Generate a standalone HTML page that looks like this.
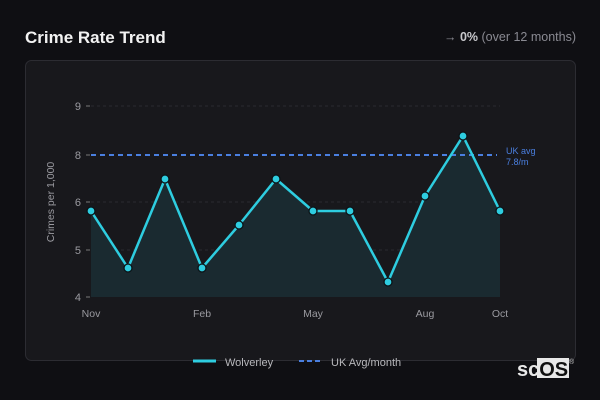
<!DOCTYPE html>
<html><head><meta charset="utf-8"><style>
body{margin:0;width:600px;height:400px;background:#0f0f13;overflow:hidden;font-family:"Liberation Sans",sans-serif;}
</style></head><body>
<svg width="600" height="400" xmlns="http://www.w3.org/2000/svg" style="position:absolute;left:0;top:0">
<text x="25" y="43" fill="#f2f2f2" font-size="17" font-weight="bold" font-family="Liberation Sans">Crime Rate Trend</text>
<text x="576" y="41" fill="#8a8a92" font-size="12.5" text-anchor="end" font-family="Liberation Sans">→ <tspan font-weight="bold" fill="#c8c8cc">0%</tspan> (over 12 months)</text>
<rect x="25.5" y="60.5" width="550" height="300" rx="6" fill="#18181c" stroke="#2c2c32"/>
<g stroke="#2a2a30" stroke-dasharray="3,3" stroke-width="1">
<line x1="91" y1="106" x2="500" y2="106"/><line x1="91" y1="202" x2="500" y2="202"/><line x1="91" y1="250" x2="500" y2="250"/>
</g>
<g stroke="#777" stroke-width="1"><line x1="86" y1="106" x2="90" y2="106"/><line x1="86" y1="155" x2="90" y2="155"/><line x1="86" y1="202" x2="90" y2="202"/><line x1="86" y1="250" x2="90" y2="250"/><line x1="86" y1="297" x2="90" y2="297"/></g>
<g fill="#9a9aa0" font-size="11" text-anchor="end" font-family="Liberation Sans">
<text x="81" y="110">9</text><text x="81" y="159">8</text><text x="81" y="206">6</text><text x="81" y="254">5</text><text x="81" y="301">4</text></g>
<text transform="translate(54,202) rotate(-90)" fill="#9a9aa0" font-size="10.5" text-anchor="middle" font-family="Liberation Sans">Crimes per 1,000</text>
<g fill="#9a9aa0" font-size="10.5" text-anchor="middle" font-family="Liberation Sans">
<text x="91" y="317">Nov</text><text x="202" y="317">Feb</text><text x="313" y="317">May</text><text x="425" y="317">Aug</text><text x="500" y="317">Oct</text></g>
<polygon fill="#1a2a30" points="91,211 128,268 165,179 202,268 239,225 276,179 313,211 350,211 388,282 425,196 463,136 500,211 500,297 91,297"/>
<line x1="91" y1="155" x2="497" y2="155" stroke="#4a7fe0" stroke-width="2" stroke-dasharray="5,4"/>
<text x="506" y="154" fill="#4a7fe0" font-size="9" font-family="Liberation Sans">UK avg</text>
<text x="506" y="165" fill="#4a7fe0" font-size="9" font-family="Liberation Sans">7.8/m</text>
<polyline fill="none" stroke="#2ecde0" stroke-width="2.5" stroke-linejoin="round" points="91,211 128,268 165,179 202,268 239,225 276,179 313,211 350,211 388,282 425,196 463,136 500,211"/>
<g fill="#2ecde0" stroke="#0c1418" stroke-width="1.3">
<circle cx="91" cy="211" r="4"/><circle cx="128" cy="268" r="4"/><circle cx="165" cy="179" r="4"/><circle cx="202" cy="268" r="4"/><circle cx="239" cy="225" r="4"/><circle cx="276" cy="179" r="4"/><circle cx="313" cy="211" r="4"/><circle cx="350" cy="211" r="4"/><circle cx="388" cy="282" r="4"/><circle cx="425" cy="196" r="4"/><circle cx="463" cy="136" r="4"/><circle cx="500" cy="211" r="4"/></g>
<rect x="186" y="361" width="230" height="10" fill="#0f0f13"/>
<line x1="193" y1="361" x2="216" y2="361" stroke="#2ecde0" stroke-width="3"/>
<text x="225" y="366" fill="#b8b8bc" font-size="11" font-family="Liberation Sans">Wolverley</text>
<line x1="299" y1="361" x2="323" y2="361" stroke="#4a7fe0" stroke-width="2" stroke-dasharray="5,3"/>
<text x="331" y="366" fill="#b8b8bc" font-size="11" font-family="Liberation Sans">UK Avg/month</text>
<rect x="537" y="358" width="32" height="20" fill="#e8e8e8"/>
<text x="517" y="376" fill="#e8e8e8" font-size="20" font-weight="bold" font-family="Liberation Sans">sc<tspan fill="#111">OS</tspan></text>
<text x="569" y="364" fill="#ccc" font-size="7" font-family="Liberation Sans">®</text>
</svg>
</body></html>
